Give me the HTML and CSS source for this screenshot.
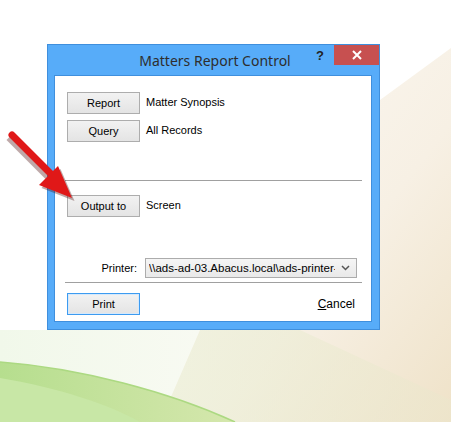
FILE: index.html
```html
<!DOCTYPE html>
<html lang="en">
<head>
    <meta charset="UTF-8">
    <title>Matters Report Control</title>
    <link rel="stylesheet" href="styles.css">
</head>
<body>
    <div class="desktop">
        <!-- Fondo de escritorio -->
        <svg class="wallpaper" width="451" height="422" viewBox="0 0 451 422">
            <defs>
                <linearGradient id="beige" x1="0" y1="0" x2="1" y2="1">
                    <stop offset="0" stop-color="#fcfaf6"/>
                    <stop offset="0.6" stop-color="#f7f0e4"/>
                    <stop offset="1" stop-color="#efe2c8"/>
                </linearGradient>
                <linearGradient id="mint" x1="0" y1="0" x2="1" y2="0">
                    <stop offset="0" stop-color="#f1f8ea"/>
                    <stop offset="1" stop-color="#f8faf2"/>
                </linearGradient>
                <linearGradient id="wedge" x1="0" y1="0" x2="1" y2="0">
                    <stop offset="0" stop-color="#eaf1d8"/>
                    <stop offset="1" stop-color="#ece6cc"/>
                </linearGradient>
                <linearGradient id="green" x1="0" y1="0" x2="1" y2="0">
                    <stop offset="0" stop-color="#b6de8e"/>
                    <stop offset="1" stop-color="#d5e7ad"/>
                </linearGradient>
            </defs>
            <rect width="451" height="422" fill="#ffffff"/>
            <polygon points="0,330 200,330 160,422 0,422" fill="url(#mint)"/>
            <polygon points="380,100 451,48 451,422 160,422 200,330 380,330" fill="url(#beige)"/>
            <polygon points="200,330 300,330 451,400 451,422 160,422" fill="url(#wedge)" opacity="0.6"/>
            <path d="M0,362 C80,368 170,392 235,422 L0,422 Z" fill="url(#green)"/>
            <path d="M0,378 C60,388 110,405 140,422 L0,422 Z" fill="#c8e7a6"/>
            <path d="M0,362 C80,368 170,392 235,422" fill="none" stroke="#acd982" stroke-width="1.5"/>
        </svg>

        <!-- Flecha roja -->
        <svg class="arrow" width="90" height="90" viewBox="0 0 90 90">
            <g transform="translate(1.5,2)" fill="#4a0a0a" opacity="0.35">
                <path d="M10,11 L55,56 L50,61 L5,16 Z"/>
                <polygon points="73,77 40,64 59,45"/>
            </g>
            <path d="M12,13 L55,56" stroke="#e01818" stroke-width="7" stroke-linecap="round"/>
            <polygon points="72,76 39,63 58,44" fill="#e01818"/>
        </svg>

        <div class="window">
            <div class="titlebar">
                <span class="title">Matters Report Control</span>
                <span class="help">?</span>
                <span class="close">
                    <svg width="10" height="10" viewBox="0 0 10 10">
                        <path d="M1,1 L9,9 M9,1 L1,9" stroke="#fff" stroke-width="2"/>
                    </svg>
                </span>
            </div>
            <div class="client">
                <div class="row">
                    <button class="btn">Report</button>
                    <span class="value">Matter Synopsis</span>
                </div>
                <div class="row row-query">
                    <button class="btn">Query</button>
                    <span class="value">All Records</span>
                </div>
                <div class="separator sep-top"></div>
                <div class="row row-output">
                    <button class="btn">Output to</button>
                    <span class="value">Screen</span>
                </div>
                <div class="printer-row">
                    <span class="label">Printer:</span>
                    <div class="select">
                        <span class="select-text">\\ads-ad-03.Abacus.local\ads-printer-03</span>
                        <svg class="chevron" width="9" height="6" viewBox="0 0 9 6">
                            <path d="M1,1 L4.5,4.5 L8,1" stroke="#555" stroke-width="1.5" fill="none"/>
                        </svg>
                    </div>
                </div>
                <div class="separator sep-bottom"></div>
                <div class="actions">
                    <button class="btn btn-default">Print</button>
                    <span class="cancel"><u>C</u>ancel</span>
                </div>
            </div>
        </div>
    </div>
</body>
</html>
```

FILE: styles.css
```css
/* Estilos generales */
body {
    margin: 0;
    font-family: "Liberation Sans", Arial, sans-serif;
    font-size: 11px;
    color: #000;
}
.desktop {
    position: relative;
    width: 451px;
    height: 422px;
    overflow: hidden;
}
.wallpaper {
    position: absolute;
    left: 0;
    top: 0;
}
.arrow {
    position: absolute;
    left: 0;
    top: 122px;
    z-index: 2;
}

/* Ventana */
.window {
    position: absolute;
    left: 47px;
    top: 44px;
    width: 333px;
    height: 286px;
    box-sizing: border-box;
    background-color: #57acf9;
    border: 1px solid #3f8fdd;
    padding: 0 7px 7px 6px;
    display: flex;
    flex-direction: column;
}
.titlebar {
    position: relative;
    height: 30px;
    display: flex;
    align-items: center;
    justify-content: center;
}
.title {
    font-family: "Noto Sans", sans-serif;
    font-size: 14px;
    color: #2e2e2e;
    margin-left: 4px;
    margin-top: 1px;
}
.help {
    position: absolute;
    left: 262px;
    top: 3px;
    font-family: "Liberation Sans", sans-serif;
    font-weight: bold;
    font-size: 13px;
    color: #222;
}
.close {
    position: absolute;
    left: 280px;
    top: 0;
    width: 45px;
    height: 20px;
    background-color: #c75050;
    display: flex;
    align-items: center;
    justify-content: center;
}
.client {
    flex: 1;
    background-color: #fff;
    border: 1px solid #3f8fdd;
    padding: 16px 0 0 12px;
}

/* Filas */
.row {
    display: flex;
    align-items: center;
    gap: 6px;
}
.row-query {
    margin-top: 6px;
}
.row-output {
    margin-top: 14px;
}
.btn {
    width: 73px;
    height: 22px;
    padding: 0;
    font-family: "Liberation Sans", Arial, sans-serif;
    font-size: 11px;
    color: #000;
    background: linear-gradient(#f2f2f2, #e4e4e4);
    border: 1px solid #adadad;
    border-radius: 0;
}
.btn-default {
    border-color: #3d9bf0;
    box-shadow: inset 0 0 0 1px #d6e9fb;
}
.value {
    margin-top: -2px;
}
.separator {
    width: 297px;
    margin-left: -2px;
    border-top: 1px solid #a0a0a0;
}
.sep-top {
    margin-top: 38px;
}
.sep-bottom {
    margin-top: 4px;
}

/* Impresora */
.printer-row {
    width: 290px;
    margin-top: 41px;
    display: flex;
    align-items: center;
    justify-content: flex-end;
    gap: 8px;
}
.select {
    width: 212px;
    height: 20px;
    box-sizing: border-box;
    border: 1px solid #acacac;
    background: linear-gradient(#f5f5f5, #e9e9e9);
    display: flex;
    align-items: center;
    padding: 0 6px 0 3px;
}
.select-text {
    flex: 1;
    overflow: hidden;
    white-space: nowrap;
    font-size: 11.5px;
    font-family: "Liberation Sans", Arial, sans-serif;
}
.chevron {
    margin-left: 6px;
}

/* Acciones */
.actions {
    width: 288px;
    margin-top: 10px;
    display: flex;
    align-items: center;
    justify-content: space-between;
}
.cancel {
    font-size: 12px;
}
```
